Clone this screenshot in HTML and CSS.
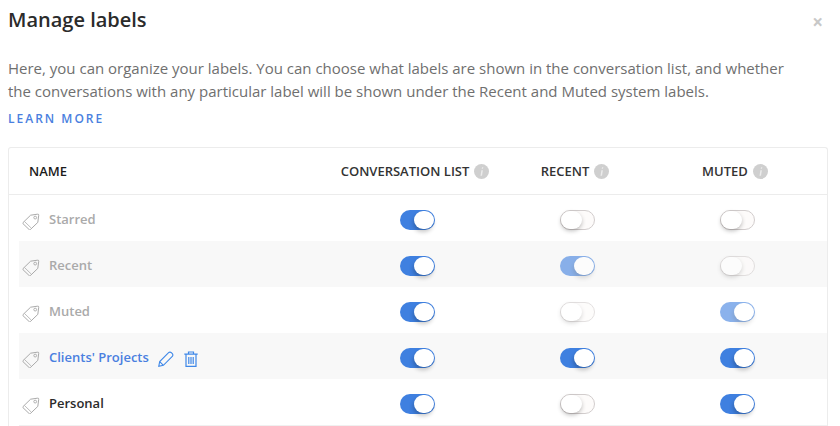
FILE: index.html
```html
<!DOCTYPE html>
<html lang="en">
<head>
<meta charset="utf-8">
<title>Manage labels</title>
<link rel="stylesheet" href="styles.css">
</head>
<body>
<svg class="defs" width="0" height="0" aria-hidden="true">
  <symbol id="tag" viewBox="0 0 18 17">
    <path d="M1 9.6 8.6 2.2 15.4 1.2a1.1 1.1 0 0 1 1.3 1.3L15.8 9.4 8.3 16.6a.8.8 0 0 1-1.1 0L1 10.7a.8.8 0 0 1 0-1.1Z" fill="none" stroke="currentColor" stroke-width=".9"/>
    <path d="M2.6 8.6 9.2 15" fill="none" stroke="currentColor" stroke-width=".7"/>
    <circle cx="13.2" cy="4.6" r="1.4" fill="none" stroke="currentColor" stroke-width=".8"/>
  </symbol>
  <symbol id="info" viewBox="0 0 15 15">
    <circle cx="7.5" cy="7.5" r="7.5" fill="#cfcfcf"/>
    <path d="M8 3.2h1.3l-.3 1.5H7.7ZM7.4 6.2h1.5L8 11.8H6.5Z" fill="#ececec"/>
  </symbol>
</svg>
<main class="dialog">
  <header class="head">
    <h1 class="title">Manage labels</h1>
    <span class="close">×</span>
  </header>
  <p class="intro">Here, you can organize your labels. You can choose what labels are shown in the conversation list, and whether<br>the conversations with any particular label will be shown under the Recent and Muted system labels.</p>
  <a class="learn">LEARN MORE</a>
  <section class="panel">
    <div class="cols thead">
      <div class="th-name">NAME</div>
      <div class="th">CONVERSATION LIST <svg class="info"><use href="#info"/></svg></div>
      <div class="th">RECENT <svg class="info"><use href="#info"/></svg></div>
      <div class="th">MUTED <svg class="info"><use href="#info"/></svg></div>
    </div>
    <div class="cols row">
      <div class="name sys"><svg class="tag"><use href="#tag"/></svg>Starred</div>
      <div class="cell"><span class="sw on"></span></div>
      <div class="cell"><span class="sw off"></span></div>
      <div class="cell"><span class="sw off"></span></div>
    </div>
    <div class="cols row alt">
      <div class="name sys"><svg class="tag"><use href="#tag"/></svg>Recent</div>
      <div class="cell"><span class="sw on"></span></div>
      <div class="cell"><span class="sw on dim"></span></div>
      <div class="cell"><span class="sw off dim"></span></div>
    </div>
    <div class="cols row">
      <div class="name sys"><svg class="tag"><use href="#tag"/></svg>Muted</div>
      <div class="cell"><span class="sw on"></span></div>
      <div class="cell"><span class="sw off dim"></span></div>
      <div class="cell"><span class="sw on dim"></span></div>
    </div>
    <div class="cols row alt">
      <div class="name link"><svg class="tag"><use href="#tag"/></svg>Clients' Projects
        <svg class="act pencil" viewBox="0 0 16 16"><path d="M.8 15.2 1.7 10.6 10.6 1.7a1.9 1.9 0 0 1 2.7 0l1 1a1.9 1.9 0 0 1 0 2.7L5.4 14.3ZM1.7 10.6 5.4 14.3" fill="none" stroke="currentColor" stroke-width="1.1"/></svg>
        <svg class="act trash" viewBox="0 0 14 16"><path d="M.3 3.2h13.4M4.5 3V1h5V3M2 3.4V15.4h10V3.4M4.8 6v7M7 6v7M9.2 6v7" fill="none" stroke="currentColor" stroke-width="1.2"/></svg>
      </div>
      <div class="cell"><span class="sw on"></span></div>
      <div class="cell"><span class="sw on"></span></div>
      <div class="cell"><span class="sw on"></span></div>
    </div>
    <div class="cols row">
      <div class="name own"><svg class="tag"><use href="#tag"/></svg>Personal</div>
      <div class="cell"><span class="sw on"></span></div>
      <div class="cell"><span class="sw off"></span></div>
      <div class="cell"><span class="sw on"></span></div>
    </div>
  </section>
</main>
</body>
</html>
```
FILE: styles.css
```css
* { box-sizing: border-box; }
html, body { margin: 0; height: 426px; overflow: hidden; background: #fff; }
body { font-family: "Open Sans", sans-serif; color: #333; }
.defs { position: absolute; }
.dialog { padding: 0 12px 0 8px; }
.head { display: flex; justify-content: space-between; align-items: center; height: 40px; }
.title { margin: 0; font-size: 20px; font-weight: 600; line-height: 40px; color: #2b2b2b; }
.close { font-size: 19px; font-weight: 700; line-height: 40px; color: #c8c8c8; margin: 3px 5px 0 0; }
.intro { margin: 17px 0 0; font-size: 15px; line-height: 23px; color: #6f6f6f; }
.learn { display: block; margin-top: 7px; font-size: 12px; line-height: 18px; font-weight: 600; letter-spacing: 2px; color: #4a7fe0; }
.panel { margin-top: 19px; border: 1px solid #ececec; border-bottom: 0; border-radius: 3px 3px 0 0; height: 279px; }
.cols { display: grid; grid-template-columns: 318px 160px 160px 160px; margin-left: 10px; }
.thead { height: 47px; margin-left: 0; padding-left: 10px; border-bottom: 1px solid #ececec; align-items: center; }
.th-name { padding-left: 10px; font-size: 13px; font-weight: 600; color: #1c1c1c; }
.th { display: flex; justify-content: center; align-items: center; gap: 5px; padding-right: 4px; font-size: 13px; font-weight: 600; color: #333; white-space: nowrap; }
.info { width: 15px; height: 15px; }
.row { height: 46px; align-items: center; }
.row:last-child { height: 47px; border-bottom: 1px solid #f0f0f0; }
.alt { background: #f8f8f8; }
.name { display: flex; align-items: center; padding: 2px 0 0 3px; font-size: 13px; font-weight: 600; }
.tag { width: 18px; height: 17px; margin: 4px 9px 0 0; color: #a0a0a0; flex: none; }
.sys { color: #aaa; }
.link { color: #4a7fe0; }
.own { color: #2b2b2b; }
.act { color: #3f88e8; flex: none; margin-top: 3px; }
.pencil { width: 16px; height: 16px; margin-left: 9px; }
.trash { width: 14px; height: 16px; margin-left: 10px; }
.cell { display: flex; justify-content: center; padding-top: 4px; }
.sw { position: relative; display: block; width: 35px; height: 20px; border-radius: 10px; }
.sw::after { content: ""; position: absolute; top: 1px; width: 21px; height: 18px; border-radius: 9px; background: #fff; }
.sw.on { background: #3f80e0; }
.sw.on::after { right: 1px; width: 20px; box-shadow: -1px 3px 4px rgba(0, 0, 0, .22); }
.sw.off { background: #fdfbfa; border: 1px solid #d2cdcd; }
.sw.off::after { top: 0; left: 0; width: 21px; height: 18px; box-shadow: 0 2px 4px rgba(0, 0, 0, .25); }
.sw.dim { opacity: .6; }
```
